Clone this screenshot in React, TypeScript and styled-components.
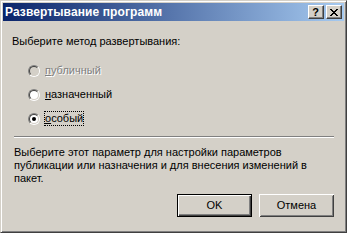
import React from "react";
import styled, { createGlobalStyle } from "styled-components";

const GlobalStyle = createGlobalStyle`
  html, body {
    margin: 0;
    padding: 0;
    background: #d4d0c8;
  }
  * {
    box-sizing: border-box;
  }
`;

const Window = styled.div`
  width: 347px;
  height: 233px;
  display: flex;
  flex-direction: column;
  background: #d4d0c8;
  border: 1px solid;
  border-color: #d4d0c8 #404040 #404040 #d4d0c8;
  box-shadow: inset 1px 1px #ffffff, inset -1px -1px #808080;
  padding: 2px;
  font-family: "Liberation Sans", Arial, sans-serif;
  font-size: 11px;
  color: #000;
`;

const TitleBar = styled.div`
  height: 18px;
  display: flex;
  align-items: center;
  justify-content: space-between;
  padding: 0 2px 0 2px;
  background: linear-gradient(to right, #0a246a, #a6caf0);
`;

const Title = styled.span`
  color: #ffffff;
  font-weight: bold;
  font-size: 12px;
  letter-spacing: 0.1px;
`;

const Controls = styled.div`
  display: flex;
  gap: 2px;
`;

const CaptionButton = styled.div`
  width: 16px;
  height: 14px;
  display: flex;
  align-items: center;
  justify-content: center;
  background: #d4d0c8;
  border: 1px solid;
  border-color: #ffffff #404040 #404040 #ffffff;
  box-shadow: inset -1px -1px #808080;
  font-weight: bold;
  font-size: 11px;
  line-height: 1;
  padding-right: 1px;
`;

const Body = styled.div`
  flex: 1;
  display: flex;
  flex-direction: column;
  padding: 14px 10px 0 9px;
`;

const Prompt = styled.div`
  line-height: 13px;
  margin-bottom: 16px;
`;

const Options = styled.div`
  display: flex;
  flex-direction: column;
  gap: 11px;
  padding-left: 16px;
`;

const Option = styled.label<{ $disabled?: boolean }>`
  display: flex;
  align-items: center;
  height: 13px;
  gap: 4px;
  color: ${(p) => (p.$disabled ? "#808080" : "#000")};
  text-shadow: ${(p) => (p.$disabled ? "1px 1px 0 #ffffff" : "none")};
`;

const RadioOuter = styled.span`
  width: 12px;
  height: 12px;
  border-radius: 50%;
  border: 1px solid;
  border-color: #808080 #ffffff #ffffff #808080;
  display: flex;
`;

const RadioInner = styled.span<{ $disabled?: boolean }>`
  flex: 1;
  border-radius: 50%;
  border: 1px solid;
  border-color: #404040 #d4d0c8 #d4d0c8 #404040;
  background: ${(p) => (p.$disabled ? "#d4d0c8" : "#ffffff")};
  display: flex;
  align-items: center;
  justify-content: center;
`;

const Dot = styled.span`
  width: 4px;
  height: 4px;
  border-radius: 50%;
  background: #000;
`;

const OptionText = styled.span<{ $focused?: boolean }>`
  padding: 1px 1px;
  outline: ${(p) => (p.$focused ? "1px dotted #000" : "none")};
  outline-offset: -1px;
  line-height: 13px;
`;

const Separator = styled.div`
  height: 2px;
  margin: 11px 0 0 2px;
  border-top: 1px solid #808080;
  border-bottom: 1px solid #ffffff;
`;

const Description = styled.div`
  margin: 8px 0 0 2px;
  line-height: 13px;
`;

const Footer = styled.div`
  display: flex;
  justify-content: flex-end;
  gap: 7px;
  margin-top: auto;
  margin-bottom: 13px;
`;

const Button = styled.div<{ $default?: boolean }>`
  width: 75px;
  height: 23px;
  display: flex;
  align-items: center;
  justify-content: center;
  background: #d4d0c8;
  border: ${(p) => (p.$default ? "1px solid #000" : "none")};
  box-shadow: ${(p) =>
    p.$default
      ? "inset 1px 1px #ffffff, inset -1px -1px #404040, inset -2px -2px #808080"
      : "inset 1px 1px #ffffff, inset -1px -1px #404040, inset 2px 2px #d4d0c8, inset -2px -2px #808080"};
  padding-bottom: 1px;
`;

const U = styled.span`
  text-decoration: underline;
`;

const CloseGlyph = () => (
  <svg width="8" height="7" viewBox="0 0 8 7" shapeRendering="crispEdges">
    <path
      d="M0 0h2v1h-2zM6 0h2v1h-2zM1 1h2v1h-2zM5 1h2v1h-2zM2 2h4v1h-4zM3 3h2v1h-2zM2 4h4v1h-4zM1 5h2v1h-2zM5 5h2v1h-2zM0 6h2v1h-2zM6 6h2v1h-2z"
      fill="#000"
    />
  </svg>
);

const Radio = ({ checked, disabled }: { checked?: boolean; disabled?: boolean }) => (
  <RadioOuter>
    <RadioInner $disabled={disabled}>{checked && <Dot />}</RadioInner>
  </RadioOuter>
);

export default function App() {
  return (
    <>
      <GlobalStyle />
      <Window>
        <TitleBar>
          <Title>Развертывание программ</Title>
          <Controls>
            <CaptionButton>?</CaptionButton>
            <CaptionButton>
              <CloseGlyph />
            </CaptionButton>
          </Controls>
        </TitleBar>
        <Body>
          <Prompt>Выберите метод развертывания:</Prompt>
          <Options>
            <Option $disabled>
              <Radio disabled />
              <OptionText>
                <U>п</U>убличный
              </OptionText>
            </Option>
            <Option>
              <Radio />
              <OptionText>
                <U>н</U>азначенный
              </OptionText>
            </Option>
            <Option>
              <Radio checked />
              <OptionText $focused>
                <U>о</U>собый
              </OptionText>
            </Option>
          </Options>
          <Separator />
          <Description>
            Выберите этот параметр для настройки параметров
            <br />
            публикации или назначения и для внесения изменений в
            <br />
            пакет.
          </Description>
          <Footer>
            <Button $default>OK</Button>
            <Button>Отмена</Button>
          </Footer>
        </Body>
      </Window>
    </>
  );
}
